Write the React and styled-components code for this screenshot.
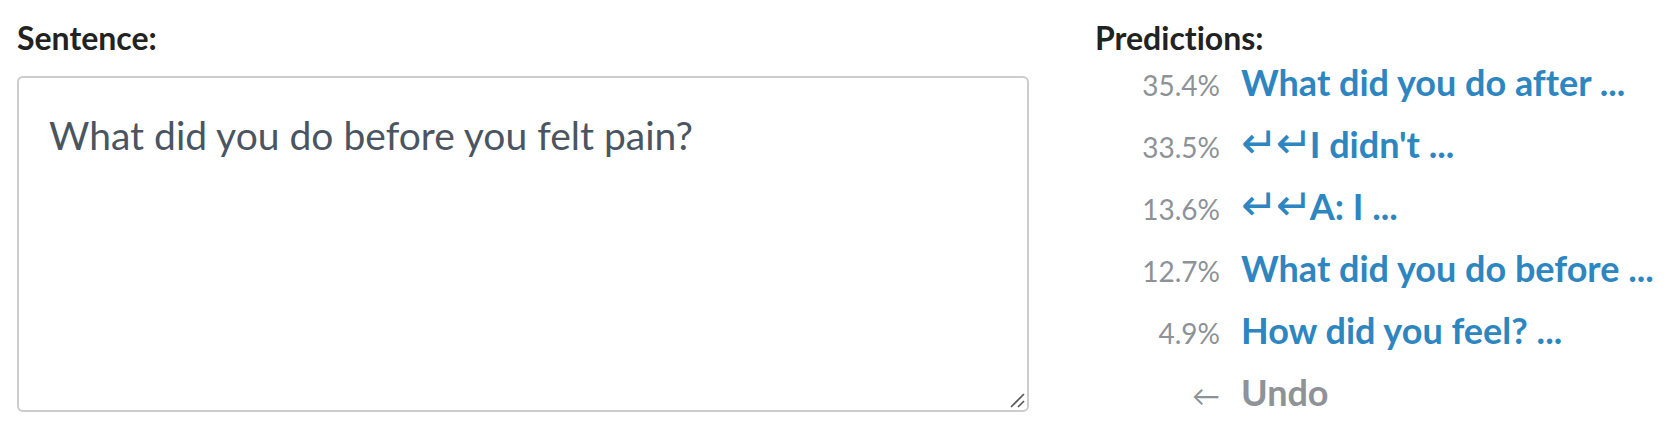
import React from "react";
import styled, { createGlobalStyle } from "styled-components";

const GlobalStyle = createGlobalStyle`
  body {
    margin: 0;
    background: #ffffff;
    font-family: Lato, "Noto Sans", sans-serif;
    font-variant-ligatures: none;
  }
`;

const Page = styled.div`
  display: flex;
  align-items: flex-start;
  gap: 66px;
  padding: 18px 17px 0 17px;
`;

const Column = styled.div`
  display: flex;
  flex-direction: column;
`;

const Label = styled.div`
  font-size: 32px;
  line-height: 40px;
  font-weight: 700;
  color: #222222;
`;

const Field = styled.div`
  position: relative;
  margin-top: 18px;
`;

const Sentence = styled.textarea`
  display: block;
  box-sizing: border-box;
  width: 1012px;
  height: 336px;
  padding: 29px 30px;
  border: 2px solid #cccccc;
  border-radius: 6px;
  font-family: Lato, "Noto Sans", sans-serif;
  font-size: 39px;
  line-height: 57px;
  color: #4a5561;
  resize: none;
  outline: none;
`;

const Grip = styled.svg`
  position: absolute;
  right: 4px;
  bottom: 4px;
  width: 16px;
  height: 16px;
  pointer-events: none;
`;

const Predictions = styled.div`
  display: grid;
  grid-template-columns: 125px auto;
  align-items: baseline;
  column-gap: 21px;
  row-gap: 23px;
  margin-top: 6px;
`;

const Prob = styled.span`
  text-align: right;
  font-size: 28px;
  line-height: 36px;
  font-weight: 400;
  color: #8d9297;
`;

const Choice = styled.span`
  font-size: 36px;
  line-height: 36px;
  font-weight: 700;
  color: ${(p) => (p.muted ? "#8f9296" : "#2e86c1")};
  white-space: nowrap;
  cursor: pointer;
`;

const Return = styled.span`
  font-family: "DejaVu Sans", sans-serif;
  font-weight: 400;
  font-size: 44px;
  line-height: 0;
  letter-spacing: -2px;
  margin-right: -1px;
`;

const predictions = [
  { p: "35.4%", text: "What did you do after ..." },
  { p: "33.5%", text: "I didn't ...", breaks: 2 },
  { p: "13.6%", text: "A: I ...", breaks: 2 },
  { p: "12.7%", text: "What did you do before ..." },
  { p: "4.9%", text: "How did you feel? ..." },
];

export default function App() {
  return (
    <>
      <GlobalStyle />
      <Page>
        <Column>
          <Label>Sentence:</Label>
          <Field>
            <Sentence defaultValue="What did you do before you felt pain?" />
            <Grip viewBox="0 0 16 16">
              <path d="M2 15 L15 2 M9 15 L15 9" stroke="#555" strokeWidth="1.6" fill="none" />
            </Grip>
          </Field>
        </Column>
        <Column>
          <Label>Predictions:</Label>
          <Predictions>
            {predictions.map((row) => (
              <React.Fragment key={row.p}>
                <Prob>{row.p}</Prob>
                <Choice>
                  {row.breaks ? <Return>{"\u21b5\u21b5"}</Return> : null}
                  {row.text}
                </Choice>
              </React.Fragment>
            ))}
            <Prob>←</Prob>
            <Choice muted>Undo</Choice>
          </Predictions>
        </Column>
      </Page>
    </>
  );
}
